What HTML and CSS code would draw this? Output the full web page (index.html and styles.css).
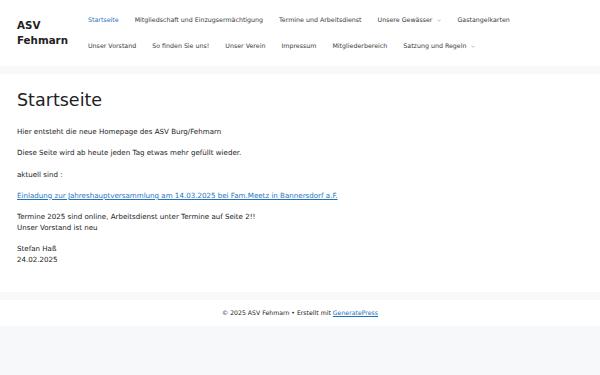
FILE: index.html
```html
<!DOCTYPE html>
<html lang="de">
<head>
    <meta charset="UTF-8">
    <meta name="viewport" content="width=device-width, initial-scale=1.0">
    <title>ASV Fehmarn</title>
    <link rel="stylesheet" href="styles.css">
</head>
<body>
    <header class="site-header">
        <div class="site-branding">
            <a href="#" class="site-title">ASV<br>Fehmarn</a>
        </div>
        <nav class="main-nav">
            <ul class="menu">
                <li class="current"><a href="#">Startseite</a></li>
                <li><a href="#">Mitgliedschaft und Einzugsermächtigung</a></li>
                <li><a href="#">Termine und Arbeitsdienst</a></li>
                <li><a href="#">Unsere Gewässer <svg class="arrow" viewBox="0 0 10 6"><path d="M1 1l4 4 4-4" fill="none" stroke="currentColor" stroke-width="1.2"/></svg></a></li>
                <li><a href="#">Gastangelkarten</a></li>
                <li><a href="#">Unser Vorstand</a></li>
                <li><a href="#">So finden Sie uns!</a></li>
                <li><a href="#">Unser Verein</a></li>
                <li><a href="#">Impressum</a></li>
                <li><a href="#">Mitgliederbereich</a></li>
                <li><a href="#">Satzung und Regeln <svg class="arrow" viewBox="0 0 10 6"><path d="M1 1l4 4 4-4" fill="none" stroke="currentColor" stroke-width="1.2"/></svg></a></li>
            </ul>
        </nav>
    </header>

    <main class="site-content">
        <h1 class="entry-title">Startseite</h1>
        <div class="entry-content">
            <p>Hier entsteht die neue Homepage des ASV Burg/Fehmarn</p>
            <p>Diese Seite wird ab heute jeden Tag etwas mehr gefüllt wieder.</p>
            <p>aktuell sind :</p>
            <p><a href="#">Einladung zur Jahreshauptversammlung am 14.03.2025 bei Fam.Meetz in Bannersdorf a.F.</a></p>
            <p>Termine 2025 sind online, Arbeitsdienst unter Termine auf Seite 2!!<br>Unser Vorstand ist neu</p>
            <p>Stefan Haß<br>24.02.2025</p>
        </div>
    </main>

    <footer class="site-info">
        © 2025 ASV Fehmarn • Erstellt mit <a href="#">GeneratePress</a>
    </footer>
</body>
</html>
```

FILE: styles.css
```css
body {
    margin: 0;
    font-family: "DejaVu Sans", sans-serif;
    font-size: 7.1px;
    line-height: 1.5;
    color: #222;
    background-color: #f7f8f9;
}

a {
    color: #1e73be;
}

.site-header {
    display: flex;
    align-items: center;
    background-color: #fff;
    padding: 7px 17px;
    height: 52px;
}

.site-branding {
    width: 63px;
}

.site-title {
    font-size: 10.3px;
    font-weight: bold;
    line-height: 14px;
    color: #222;
    text-decoration: none;
}

.main-nav {
    width: 445px;
}

.menu {
    list-style: none;
    margin: 0;
    padding: 0;
    display: flex;
    flex-wrap: wrap;
}

.menu a {
    display: block;
    padding: 0 8px;
    line-height: 26px;
    font-size: 6.3px;
    color: #3a3a3a;
    text-decoration: none;
}

.menu .current a {
    color: #1e73be;
}

.arrow {
    width: 4px;
    height: 3px;
    margin-left: 3px;
    vertical-align: middle;
    color: #777;
}

.site-content {
    background-color: #fff;
    margin-top: 8px;
    padding: 16px 17px 16px;
}

.entry-title {
    font-size: 17.5px;
    font-weight: normal;
    line-height: 21px;
    margin: 0 0 16px;
}

.entry-content p {
    margin: 0 0 1.5em;
}

.site-info {
    background-color: #fff;
    margin-top: 8px;
    text-align: center;
    font-size: 6.2px;
    line-height: 26px;
}
```
